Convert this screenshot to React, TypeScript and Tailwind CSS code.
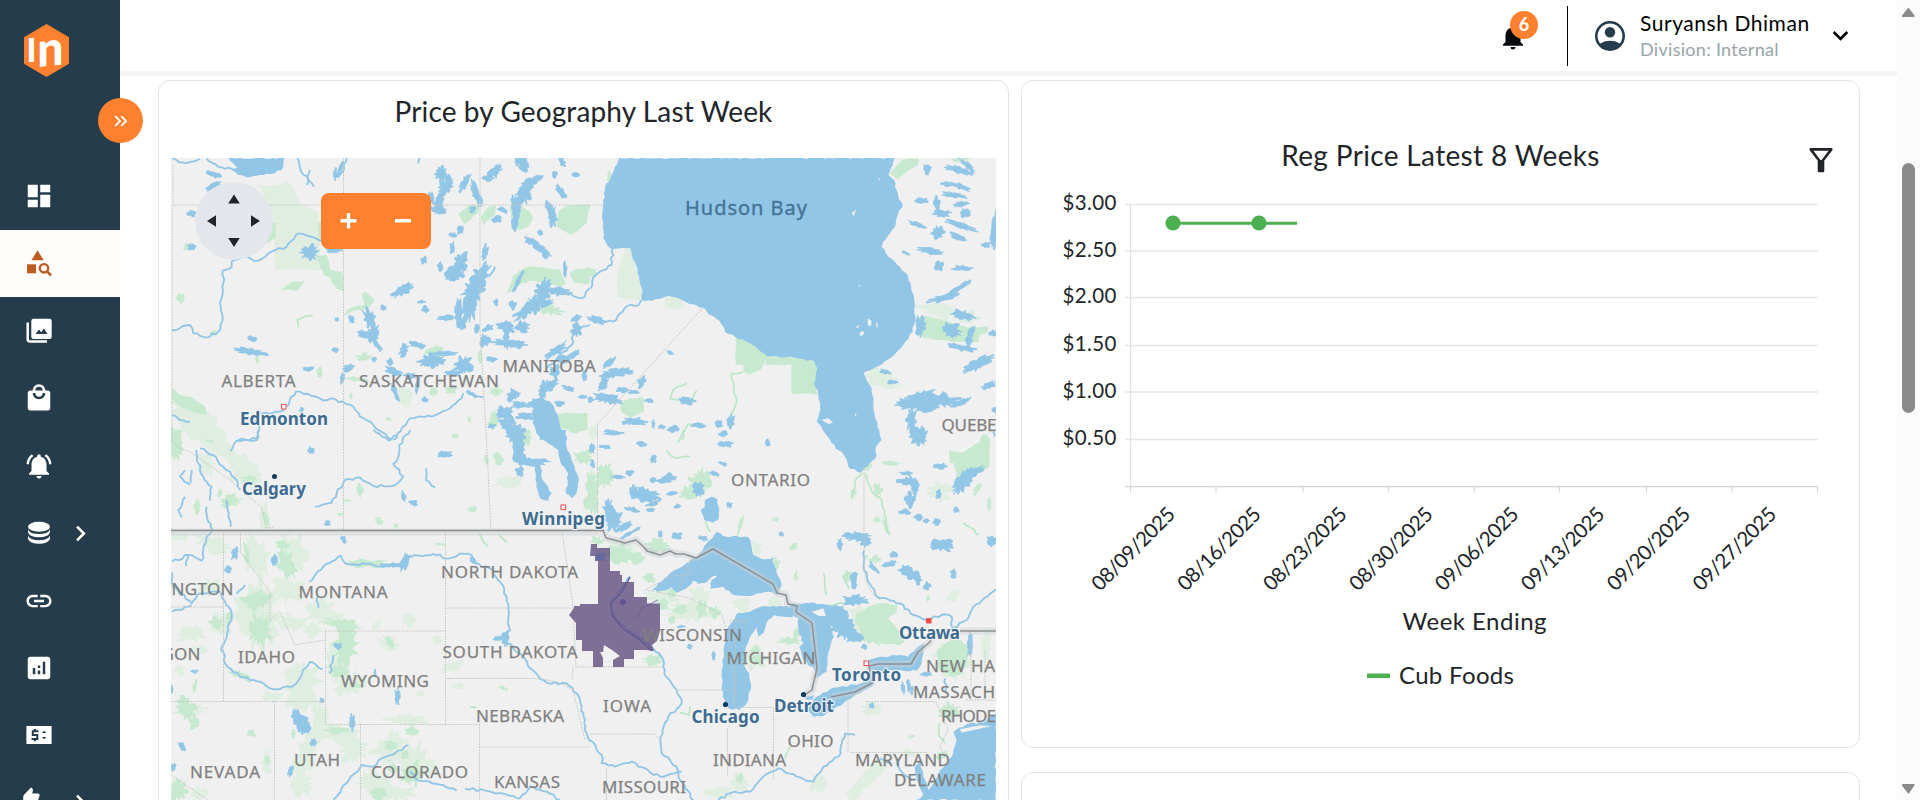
import React from "react";
import {
  MdDashboard,
  MdLocalMall,
  MdNotificationsActive,
  MdInsertLink,
  MdAnalytics,
  MdNotifications,
  MdKeyboardArrowDown,
  MdChevronRight,
  MdKeyboardDoubleArrowRight,
} from "react-icons/md";

/* ---------- map geometry helpers ---------- */

type Blob = [number, number, number, number, number];

const noise = (n: number) => {
  const v = Math.sin(n * 12.9898) * 43758.5453;
  return v - Math.floor(v);
};

function blobPath([cx, cy, rx, ry, rot]: Blob): string {
  const count = Math.max(14, Math.min(34, Math.round((rx + ry) * 0.6)));
  const a = (rot * Math.PI) / 180;
  let d = "";
  for (let i = 0; i < count; i++) {
    const t = (i / count) * Math.PI * 2;
    const k = 0.55 + noise(cx * 0.37 + cy * 0.71 + i * 1.93) * 0.78;
    const x = Math.cos(t) * rx * k;
    const y = Math.sin(t) * ry * k;
    const px = cx + x * Math.cos(a) - y * Math.sin(a);
    const py = cy + x * Math.sin(a) + y * Math.cos(a);
    d += `${i ? "L" : "M"}${px.toFixed(1)} ${py.toFixed(1)}`;
  }
  return d + "Z";
}

function rough(points: string, amp: number, close = false): string {
  const pts = points.trim().split(/\s+/).map((p) => p.split(",").map(Number));
  if (close) pts.push(pts[0]);
  let d = `M${pts[0][0]} ${pts[0][1]}`;
  for (let i = 1; i < pts.length; i++) {
    const [x0, y0] = pts[i - 1];
    const [x1, y1] = pts[i];
    const len = Math.hypot(x1 - x0, y1 - y0) || 1;
    const steps = Math.max(1, Math.round(len / 11));
    for (let s = 1; s <= steps; s++) {
      const t = s / steps;
      const off = s === steps ? 0 : (noise(x0 + y1 * 1.7 + s * 3.1) - 0.5) * 2 * amp;
      const x = x0 + (x1 - x0) * t + (-(y1 - y0) / len) * off;
      const y = y0 + (y1 - y0) * t + ((x1 - x0) / len) * off;
      d += `L${x.toFixed(1)} ${y.toFixed(1)}`;
    }
  }
  return close ? d + "Z" : d;
}

interface Region {
  dx: number;
  dy: number;
  pale: Blob[];
  parks: Blob[];
  palePoly: string[];
  parkPoly: string[];
  lakes: Blob[];
  water: string[];
  rivers: string[];
  trails: string[];
}

const northWest: Region = {
  dx: 160,
  dy: 70,
  pale: [[60, 1000, 30, 20, 40], [130, 1060, 60, 34, 40], [735, 980, 22, 30, 0], [1010, 960, 22, 16, 0]],
  parks: [
    [60, 685, 14, 16, 0], [88, 530, 18, 12, 0], [480, 908, 10, 16, 0], [612, 862, 24, 12, 0],
    [825, 845, 26, 20, 0], [875, 960, 18, 14, 0], [822, 965, 10, 16, 20], [292, 870, 7, 9, 0],
    [1172, 720, 36, 16, 10], [920, 712, 14, 10, 0], [686, 1048, 10, 7, 20], [1008, 965, 18, 12, 0],
    [960, 862, 6, 20, 0], [1000, 1050, 16, 26, 0], [885, 1098, 10, 7, 0], [928, 1048, 5, 12, -20],
    [572, 978, 5, 9, 0], [590, 928, 44, 6, 8], [160, 790, 14, 7, -30],
  ],
  palePoly: ["280,346 360,346 378,333 395,345 420,400 475,425 482,600 345,598 342,480 340,440 300,350", "36,1020 90,1010 140,1050 200,1085 190,1110 90,1110 50,1050"],
  parkPoly: [
    "360,662 395,636 435,634 415,660", "468,560 500,555 512,600 548,606 552,664 528,655 508,622 490,612",
    "474,460 484,455 484,510 474,500", "895,432 925,408 958,405 955,430 912,462", "962,440 985,412 1008,408 1004,435 970,466",
    "1050,410 1080,405 1110,425 1120,445 1105,470 1075,480 1055,450", "1195,425 1225,406 1290,404 1280,460 1235,495 1190,470",
    "1040,672 1060,615 1105,588 1200,600 1218,640 1205,650 1120,632 1085,640", "1228,610 1250,597 1290,592 1290,640 1245,640",
    "552,738 566,716 615,702 605,672 617,665 643,692 625,715 580,722", "36,955 60,975 100,985 135,1010 140,1035 110,1030 60,1010 36,985",
    "325,460 348,458 346,505 320,520", "1190,1030 1283,1030 1283,1080 1240,1090 1200,1070", "36,1070 60,1100 62,1110 36,1110",
  ],
  lakes: [
    [160, 312, 20, 9, 20], [160, 350, 22, 8, -25], [94, 431, 14, 9, 0], [94, 530, 12, 8, 0], [448, 548, 24, 22, 0],
    [520, 540, 24, 10, 0], [728, 660, 34, 16, -25], [670, 713, 9, 7, 20], [785, 696, 12, 4, 0], [795, 718, 12, 10, 30],
    [792, 570, 10, 13, 20], [840, 590, 9, 13, 0], [858, 743, 22, 8, 0], [530, 748, 8, 6, 0], [526, 840, 10, 7, 0],
    [446, 897, 14, 7, 0], [276, 806, 13, 8, 0], [272, 846, 42, 9, 10], [575, 748, 8, 12, -20], [628, 745, 16, 30, -20],
    [640, 790, 16, 30, 10], [612, 792, 18, 10, 20], [650, 822, 6, 26, -35], [732, 838, 12, 20, 20], [776, 826, 26, 9, 15],
    [690, 876, 9, 10, 0], [698, 905, 24, 12, 20], [642, 868, 8, 8, 0], [565, 892, 16, 10, -30], [548, 924, 7, 16, 10],
    [815, 872, 36, 20, -10], [855, 850, 40, 6, 0], [910, 885, 26, 26, 30], [880, 910, 24, 9, 0], [750, 918, 18, 10, 0],
    [705, 965, 8, 26, -20], [772, 945, 6, 26, 5], [795, 988, 8, 8, 0], [845, 312, 18, 22, 0], [858, 348, 16, 30, 30],
    [838, 395, 14, 34, 15], [835, 420, 26, 10, 10], [914, 340, 10, 30, 25], [948, 370, 12, 40, -20], [812, 385, 8, 18, 0],
    [1003, 305, 14, 28, 45], [985, 325, 16, 8, 0], [1090, 280, 16, 22, -20], [1073, 270, 10, 16, 0], [1110, 340, 36, 14, -35],
    [1090, 370, 24, 34, 20], [1070, 410, 16, 36, 0], [1065, 450, 9, 28, 0], [1030, 420, 16, 7, 20], [1010, 448, 14, 10, 0],
    [938, 420, 9, 10, 0], [1165, 410, 10, 22, -20], [1178, 440, 12, 30, 0], [1203, 365, 8, 22, -35], [1184, 314, 8, 10, 0],
    [1246, 314, 12, 7, 0], [1206, 275, 8, 16, -30], [1140, 488, 7, 10, 0], [1110, 515, 14, 10, 0], [1135, 530, 40, 9, 35],
    [1153, 548, 9, 18, -20], [900, 480, 8, 14, 10], [878, 495, 10, 8, 0], [877, 535, 8, 18, 0], [975, 545, 9, 22, 10],
    [900, 580, 18, 34, 15], [885, 610, 28, 20, -10], [960, 620, 22, 44, 25], [940, 665, 30, 34, 10], [930, 710, 22, 44, 10],
    [895, 722, 9, 36, 0], [905, 760, 14, 16, 0], [1008, 698, 7, 10, 0], [1060, 705, 10, 14, 0], [1075, 635, 7, 32, 25],
    [1098, 720, 42, 16, -40], [1125, 705, 20, 26, 0], [1150, 665, 22, 34, 10], [1200, 665, 30, 12, 10], [1040, 770, 26, 16, 15],
    [1085, 770, 20, 16, 0], [1050, 820, 50, 10, 5], [1040, 800, 9, 30, 0], [975, 812, 14, 18, 0], [985, 775, 16, 9, -20],
    [1075, 825, 12, 10, 0], [995, 868, 14, 10, 0], [950, 775, 7, 12, 0], [1160, 700, 20, 10, -30], [1248, 745, 16, 8, -20],
    [1250, 780, 14, 18, 10], [1190, 840, 36, 12, -35], [1210, 870, 20, 12, 0], [1240, 855, 20, 8, -30], [1215, 598, 6, 20, 0],
    [1170, 945, 24, 14, -30], [1150, 960, 12, 26, 10], [1185, 905, 14, 20, 0], [1060, 975, 20, 18, 0], [1080, 1005, 26, 10, 0],
    [1035, 1030, 22, 20, 0], [1040, 1060, 22, 20, 0], [1095, 1040, 26, 10, 0], [1070, 1090, 26, 26, 0], [1130, 1000, 24, 16, 0],
    [995, 1068, 10, 8, 0], [935, 972, 16, 5, 30], [1200, 1000, 14, 8, 0], [1270, 980, 16, 5, 0], [1225, 955, 20, 6, 20],
    [1272, 918, 8, 14, 0], [425, 1022, 6, 9, 0], [540, 300, 6, 22, 20], [526, 310, 5, 20, 0],
  ],
  water: [
    "205,264 372,264 366,300 330,312 270,322 235,315 215,300 232,292 218,278", "1118,985 1150,985 1175,1000 1190,1030 1215,1110 1140,1110 1118,1060",
  ],
  rivers: [
    "36,264 70,278 120,266", "140,266 175,290 225,300", "412,264 420,295 445,330 462,350", "440,345 450,300", "560,264 548,305 525,322", "775,280 778,264",
    "36,780 90,765 100,790 140,803 175,785 188,745 180,700 190,640 188,602 215,590 215,575 245,560 295,572 335,545 380,530 415,490 440,497 480,512 530,505",
    "1005,590 985,620", "1290,655 1265,685 1220,670 1160,665", "1290,765 1240,785 1235,825 1200,855 1160,895",
    "300,1032 370,1022 408,965 455,978 490,992 515,985 580,1010 600,1040 640,1065 695,1108", "700,1110 750,1045 815,1040 860,1020 905,985 910,970",
    "925,968 970,982", "36,1035 60,1050 90,1055", "235,1110 290,1106 298,1075 285,1050",
  ],
  trails: ["415,772 412,748 440,738 458,736"],
};

const northEast: Region = {
  dx: 590,
  dy: 70,
  pale: [[1050, 720, 60, 24, 10], [878, 925, 60, 32, 15], [1130, 740, 34, 20, 0], [10, 1085, 14, 24, 0]],
  parks: [[8, 608, 14, 14, 0], [58, 320, 8, 16, 0], [1115, 268, 26, 8, 0], [1185, 1106, 14, 10, 0]],
  palePoly: ["82,600 105,540 125,530 140,600 158,660 150,692 82,682", "225,685 265,680 285,705 262,720 228,710"],
  parkPoly: [
    "438,800 480,815 533,856 515,895 480,914 460,905 460,885 438,885", "530,862 600,862 675,872 685,895 675,935 682,972 605,972 605,884 525,884",
    "978,742 1010,738 1070,752 1130,772 1195,770 1190,790 1170,795 1165,818 1100,815 1040,810 990,800", "93,998 120,985 160,982 162,1025 120,1042 93,1025",
    "900,312 935,270 985,264 985,285 950,305 925,328", "715,1045 745,1046 762,1080 735,1070",
  ],
  lakes: [
    [1014, 296, 12, 16, 0], [1105, 300, 40, 9, 15], [1130, 285, 26, 8, 45], [1070, 342, 16, 7, 10], [1112, 350, 28, 9, 20],
    [1092, 375, 34, 7, 10], [995, 391, 20, 7, 0], [1040, 400, 9, 20, 0], [1058, 430, 26, 9, 0], [1115, 402, 26, 8, -10],
    [1125, 430, 14, 12, 0], [980, 464, 28, 6, 20], [1110, 466, 46, 8, 20], [1044, 487, 18, 17, 0], [1100, 500, 24, 8, 20],
    [948, 549, 12, 4, 20], [1022, 543, 34, 8, 10], [1048, 588, 12, 16, 0], [1115, 594, 28, 7, 0], [1188, 524, 12, 9, 0],
    [1213, 470, 8, 44, 10], [1212, 510, 8, 24, 0], [1060, 684, 44, 9, -15], [1105, 655, 46, 7, -32], [1120, 735, 36, 12, 15],
    [990, 768, 14, 28, 0], [1085, 780, 26, 20, 10], [1140, 800, 9, 34, 20], [1110, 832, 42, 9, 10], [1206, 790, 12, 9, 0],
    [1162, 884, 50, 14, -30], [1196, 946, 24, 9, -20], [888, 906, 20, 6, 15], [906, 936, 18, 5, 0], [985, 985, 50, 16, -20],
    [1050, 990, 60, 20, 5], [960, 1000, 46, 16, 0], [1010, 1010, 34, 14, 0], [965, 1050, 14, 34, 0], [990, 1090, 20, 20, 0],
    [1214, 1020, 8, 8, 0], [1110, 998, 30, 8, -20], [240, 848, 10, 5, 20], [58, 880, 22, 9, -45], [72, 910, 44, 12, -10],
    [40, 940, 12, 30, 20], [120, 907, 10, 7, 0], [155, 935, 12, 18, 20], [98, 960, 18, 7, 0], [55, 985, 40, 14, 10],
    [2, 990, 8, 9, 0], [130, 965, 16, 6, 0], [180, 992, 14, 7, 0], [288, 993, 26, 10, 5], [130, 1055, 36, 11, 0],
    [190, 1062, 5, 14, 0], [215, 1070, 12, 6, 0], [250, 1077, 18, 10, 0], [325, 1066, 20, 7, 0], [385, 1062, 12, 10, 0],
    [420, 1055, 12, 22, 0], [400, 1092, 12, 8, 0], [72, 1090, 24, 5, 0], [20, 750, 26, 9, 15],
  ],
  water: [
    "88,264 72,300 62,325 45,350 40,400 38,450 40,505 60,535 120,533 130,570 143,600 148,630 158,665 155,690 185,693 235,678 265,685 300,703 340,713 360,735 388,752 405,785 435,800 470,815 500,833 533,860 570,862 600,860 640,868 672,872 682,895 672,940 685,975 690,1010 685,1040 680,1055 698,1080 725,1120 745,1140 765,1160 775,1190 810,1208 822,1195 850,1170 860,1155 858,1130 875,1110 868,1080 855,1040 850,1000 845,955 830,930 820,910 860,890 900,865 940,825 968,785 976,740 972,680 955,620 930,590 895,560 875,530 880,515 915,470 925,430 938,405 925,380 912,330 895,315 915,264",
  ],
  rivers: ["68,535 65,585 40,600 8,625 2,655", "155,690 145,706 112,708 70,755 5,752", "1100,1000 1143,982", "1143,632 1080,665", "1210,1085 1215,1100"],
  trails: ["460,905 425,910 432,960 440,995 425,1030 415,1070", "290,940 250,960 240,985 265,990", "320,962 308,990", "345,1065 295,1062 275,1110"],
};

const southWest: Region = {
  dx: 160,
  dy: 430,
  pale: [
    [250, 120, 50, 40, 30], [60, 320, 30, 14, 0], [160, 340, 60, 26, 10], [290, 380, 40, 70, -20], [400, 370, 40, 60, 0],
    [290, 560, 60, 120, 0], [380, 480, 50, 40, 0], [150, 470, 40, 24, 0], [180, 580, 34, 34, 0], [400, 580, 40, 26, 20],
    [430, 760, 50, 80, 10], [340, 800, 30, 16, 0], [500, 560, 50, 20, 0], [560, 760, 36, 40, 0], [520, 700, 20, 60, 0],
    [600, 755, 24, 24, 0], [90, 610, 40, 26, 0], [120, 660, 20, 16, 0], [748, 568, 20, 24, 0], [650, 585, 20, 8, -40],
    [688, 640, 34, 20, 30], [830, 630, 14, 16, 0], [880, 710, 40, 16, -20], [900, 768, 20, 9, -20], [740, 870, 60, 20, 0],
    [690, 960, 50, 50, 20], [760, 1000, 40, 70, 10], [640, 1060, 44, 40, 0], [440, 970, 30, 90, 20], [320, 1000, 16, 40, 0],
    [520, 910, 70, 24, 0], [580, 960, 40, 40, 0], [420, 1060, 36, 40, 0], [800, 1010, 34, 30, 0], [700, 1090, 70, 24, 0],
    [1045, 155, 44, 18, 0], [460, 600, 30, 26, 0], [780, 790, 14, 12, 0], [480, 860, 26, 44, 0], [90, 840, 50, 20, 0],
    [480, 540, 40, 40, 0], [60, 720, 16, 16, 0], [140, 100, 24, 40, 0], [310, 260, 14, 50, 0], [120, 1090, 30, 20, 0],
  ],
  parks: [
    [45, 40, 24, 46, 0], [210, 214, 34, 18, -10], [270, 150, 26, 16, 20], [112, 230, 9, 24, 0], [380, 400, 26, 44, -25],
    [368, 345, 24, 12, 20], [290, 510, 44, 28, -20], [300, 600, 34, 50, 0], [170, 580, 22, 16, 30], [210, 560, 12, 24, 10],
    [550, 585, 50, 20, 10], [555, 650, 36, 50, 0], [540, 720, 30, 20, 0], [590, 765, 20, 9, 20], [692, 640, 10, 22, -30],
    [240, 735, 34, 12, 25], [80, 840, 26, 40, -20], [105, 880, 18, 20, 0], [275, 910, 12, 12, 0], [320, 990, 8, 16, 0],
    [400, 910, 7, 16, 0], [530, 902, 34, 12, 0], [760, 905, 20, 16, 20], [690, 945, 20, 16, 0], [735, 975, 14, 12, 0],
    [700, 1020, 16, 14, 0], [770, 1030, 14, 34, 0], [655, 1090, 24, 20, 0], [50, 1080, 30, 30, 20], [600, 182, 10, 20, 0],
    [655, 272, 12, 14, 0], [708, 288, 10, 8, 0], [938, 238, 14, 10, 0], [1016, 88, 14, 20, 0], [978, 88, 8, 14, 0],
    [885, 17, 12, 7, 0], [560, 212, 14, 5, 0], [542, 252, 12, 5, 0], [1033, 776, 16, 5, 25], [1270, 80, 30, 22, 0],
    [1280, 220, 12, 20, 0], [1095, 25, 20, 26, 0], [320, 270, 8, 20, -20], [260, 360, 7, 22, -20], [620, 400, 60, 12, 0],
    [105, 770, 7, 20, 10], [180, 190, 10, 12, 0], [840, 343, 14, 4, 0], [260, 380, 8, 16, -20], [745, 1035, 20, 26, 0],
  ],
  palePoly: ["110,0 180,0 230,70 290,110 320,190 300,200 250,150 200,90 120,40"],
  parkPoly: ["120,0 150,0 160,40 140,35"],
  lakes: [
    [452, 62, 9, 10, 0], [852, 72, 24, 9, 0], [502, 280, 9, 7, 0], [550, 328, 7, 12, -20], [760, 218, 12, 8, 10],
    [730, 198, 6, 14, -20], [225, 370, 10, 18, 20], [205, 418, 9, 12, 0], [342, 390, 9, 18, 0], [534, 648, 12, 9, 0],
    [430, 885, 18, 28, -20], [408, 860, 12, 22, 0], [460, 938, 8, 12, 0], [393, 1022, 7, 16, 20], [65, 950, 7, 16, -20],
    [40, 1012, 8, 12, 0], [104, 725, 10, 5, 0], [485, 812, 6, 7, 0], [712, 800, 7, 26, 0], [577, 876, 7, 24, 0],
    [645, 730, 3, 12, 0], [1078, 125, 12, 16, 0], [735, 395, 10, 26, 20], [700, 406, 40, 6, 0], [1120, 95, 40, 10, 0],
    [1080, 60, 12, 50, 0], [1035, 625, 10, 24, 0], [1020, 625, 22, 5, 0], [35, 775, 4, 12, 0], [940, 392, 14, 8, 30],
  ],
  water: [
    "1140,0 1218,0 1222,60 1240,100 1255,140 1250,190 1235,205 1218,190 1225,130 1205,105 1195,60 1140,20", "1055,0 1085,0 1085,60 1100,85 1140,90 1145,145 1175,190 1165,212 1140,205 1130,160 1125,110 1060,95",
    "398,840 412,838 420,855 440,860 445,880 455,895 448,906 425,905 412,890 400,870",
  ],
  rivers: [
    "110,60 115,100 130,140 155,170 150,212", "120,55 160,75 190,110 225,145 240,180", "212,64 230,32 290,30 298,0", "75,120 60,140 90,165", "75,200 55,240 65,262", "95,120 92,160",
    "140,230 145,275 158,300 140,320 125,392 85,375 36,395", "85,372 78,408", "200,210 205,260 212,290", "640,0 685,32 710,15", "750,0 718,45 715,80 700,102 730,140 705,165 640,168 600,142 555,150 530,190 515,218 465,230",
    "798,115 798,150 825,172", "448,455 490,410 543,377 555,400 620,402 660,410 720,405 740,378 820,372 868,385 900,370 935,375 945,400 990,415 1020,455 1040,500 1045,560 1050,600 1035,630 1060,655 1090,680 1110,715 1160,758 1220,760 1250,790 1270,850 1275,900 1290,935",
    "475,535 472,500", "36,428 40,470 95,520 120,490 180,485 195,515 215,550 205,600 185,650 195,700 240,740 300,755 340,778 400,768 450,695 488,718", "36,545 95,525", "230,492 255,465", "520,675 510,730",
    "520,1110 560,1060 605,1005 640,1010 665,985 705,970 745,945", "750,1025 775,1052 850,1065 890,1082", "915,1076 975,1082 1080,1105 1110,1070 1160,1085 1200,1110",
  ],
  trails: ["958,310 970,335 985,350", "1015,310 1040,338", "932,830 950,832"],
};

const southEast: Region = {
  dx: 590,
  dy: 430,
  pale: [
    [90, 360, 60, 30, 0], [220, 500, 50, 20, 0], [330, 495, 36, 22, 0], [300, 545, 80, 30, 0], [455, 520, 24, 20, 0],
    [500, 355, 16, 20, 0], [1050, 180, 36, 30, 0], [1090, 500, 26, 14, -40], [830, 580, 60, 50, 0], [1095, 690, 60, 60, 0],
    [1190, 650, 16, 50, 0], [850, 1030, 20, 70, 45], [800, 1080, 20, 50, 30], [690, 1060, 26, 30, 0], [450, 1060, 30, 34, 0],
    [390, 1090, 50, 16, 0], [845, 835, 26, 26, 0], [495, 680, 40, 36, 0], [555, 515, 20, 16, 0], [960, 970, 24, 12, 0],
  ],
  parks: [
    [8, 190, 18, 70, 0], [45, 135, 26, 36, 0], [330, 160, 34, 44, 30], [295, 190, 26, 20, 0], [355, 160, 14, 14, 0],
    [90, 370, 40, 26, 0], [140, 385, 24, 16, 0], [205, 350, 36, 22, 0], [178, 445, 20, 14, 0], [220, 520, 20, 16, 0],
    [245, 490, 14, 14, 0], [270, 540, 24, 14, 0], [335, 540, 16, 26, 0], [375, 545, 16, 18, 0], [245, 570, 12, 14, 0],
    [558, 405, 12, 26, 0], [600, 632, 36, 12, 0], [620, 610, 9, 20, 0], [610, 352, 14, 9, -30], [556, 268, 14, 7, 0],
    [450, 285, 7, 26, 15], [618, 440, 6, 18, 0], [190, 692, 30, 18, 0], [500, 690, 16, 18, 0], [495, 660, 16, 14, 0],
    [840, 620, 50, 20, 20], [863, 180, 14, 22, 0], [860, 270, 14, 9, 0],
    [888, 290, 7, 28, -20], [1160, 175, 9, 20, 30], [828, 380, 5, 7, 0], [855, 388, 18, 12, 0], [773, 440, 16, 16, 0],
    [1014, 505, 7, 12, 0], [965, 920, 12, 5, -20], [1080, 845, 30, 26, 0], [1198, 220, 6, 20, 0],
    [1060, 975, 20, 14, 0], [450, 1045, 12, 14, 0], [20, 330, 20, 12, 0], [905, 100, 30, 7, 0], [830, 110, 14, 16, 0], [790, 190, 9, 18, 0],
  ],
  palePoly: [],
  parkPoly: [
    "1078,62 1120,68 1190,20 1200,25 1198,110 1150,140 1105,160 1092,100 1078,98",
    "800,550 840,530 870,518 922,525 920,545 895,565 925,600 955,625 930,645 880,640 840,625 815,600 795,580",
    "1040,660 1065,640 1105,625 1135,650 1132,700 1110,735 1085,740 1045,715",
  ],
  lakes: [
    [48, 50, 18, 5, 0], [65, 5, 18, 6, 0], [155, 43, 14, 7, 0], [405, 43, 22, 8, 0], [403, 10, 10, 10, 0], [533, 38, 8, 9, 0],
    [190, 88, 8, 12, 0], [120, 128, 12, 9, 0], [85, 142, 18, 5, 0], [165, 195, 40, 20, 15], [130, 185, 10, 20, 0], [232, 145, 28, 14, -15],
    [190, 150, 10, 8, 0], [375, 132, 14, 6, 20], [400, 102, 12, 5, 20], [418, 225, 8, 8, 0], [130, 240, 24, 7, 20],
    [190, 220, 22, 6, -20], [70, 270, 24, 34, 0], [55, 240, 14, 30, 0], [100, 290, 26, 10, -30], [120, 310, 30, 5, -30], [182, 240, 12, 5, 0],
    [245, 190, 14, 7, 0], [262, 228, 10, 6, 0], [325, 180, 16, 22, 0], [210, 312, 6, 10, 0], [262, 317, 14, 9, 0], [340, 325, 14, 7, 10],
    [574, 312, 7, 8, 0], [800, 320, 36, 12, 0], [828, 335, 16, 14, 0], [750, 345, 7, 18, 0], [792, 440, 9, 18, 0], [793, 465, 8, 12, 0],
    [792, 510, 38, 14, 0], [850, 412, 20, 7, 50], [898, 402, 24, 9, -20], [910, 375, 12, 8, 0], [945, 418, 18, 14, 0], [968, 435, 26, 14, 20],
    [985, 450, 9, 16, 0], [1012, 468, 10, 12, 0], [1090, 430, 9, 12, 0], [1060, 345, 34, 18, 0], [1205, 335, 16, 16, 0], [1098, 240, 10, 8, -30],
    [950, 130, 20, 6, 0], [950, 155, 26, 12, 0], [975, 170, 12, 20, 0], [960, 210, 14, 22, 0], [945, 245, 16, 8, 0], [985, 262, 12, 8, 0],
    [1008, 272, 9, 6, 0], [1040, 275, 10, 10, -20], [1045, 192, 7, 16, 0], [1052, 110, 18, 10, 0], [1120, 155, 18, 40, 35], [1150, 125, 30, 12, -20],
    [985, 20, 22, 22, 0], [300, 650, 6, 9, 0], [370, 676, 5, 14, 0], [272, 590, 12, 4, 0], [760, 585, 34, 34, 0], [790, 622, 26, 14, 10],
    [735, 550, 34, 22, 0], [823, 650, 10, 7, 0], [940, 775, 5, 16, -10], [955, 765, 5, 18, 0], [965, 780, 5, 12, 0], [1140, 645, 7, 36, 0],
    [1008, 733, 16, 5, 0], [845, 828, 7, 8, 0], [5, 55, 8, 16, 0], [8, 100, 6, 12, 0],
  ],
  water: [
    "182,482 205,460 240,430 290,398 325,378 350,340 380,305 400,318 440,318 475,322 485,350 490,375 520,388 550,382 552,405 565,440 575,468 560,495 535,485 510,490 470,498 425,492 400,470 362,478 365,450 395,430 370,438 345,460 325,462 310,452 285,478 262,488 245,472 215,482",
    "398,700 402,650 415,590 430,572 445,548 480,545 520,528 560,530 600,530 610,560 580,560 552,555 535,570 520,610 505,620 500,590 480,620 468,650 460,700 478,730 482,780 470,820 450,840 415,835 398,800 395,740",
    "605,520 660,518 715,525 760,528 770,570 800,600 808,635 775,625 740,600 722,580 732,620 720,655 712,690 710,725 680,745 675,720 640,690 628,650 640,640 625,600 625,565 590,548",
    "645,800 672,795 668,808 650,810", "650,835 680,800 720,778 750,770 800,765 835,748 855,752 845,770 790,800 760,820 735,835 700,858 670,860",
    "830,700 840,688 880,680 930,675 955,680 985,650 1005,640 1000,670 995,700 980,722 930,720 880,722 845,722",
    "1218,850 1218,1110 980,1110 1000,1095 985,1060 975,1010 990,990 1000,1030 1015,1080 1030,1060 1050,1020 1085,980 1100,930 1090,905 1140,880 1180,878",
    "345,210 365,200 382,208 388,240 384,270 368,278 342,268 332,240 345,230",
  ],
  rivers: [
    "822,360 822,420 860,500 930,520 970,555 1010,570 1055,555 1085,560 1085,590", "1218,478 1150,530 1130,570 1080,600", "190,655 220,690 228,740 260,780 275,820 235,860 212,920 215,970 260,1010 270,1050 310,1110",
    "0,930 35,975 35,1000 75,1010 125,995 145,1010 210,1040 275,1025", "385,1110 420,1090 480,1085 520,1040 565,1015 620,1040 670,1055 700,1010 745,980 765,910 795,915",
    "120,440 95,480 60,520 75,565 120,605 190,655", "920,990 930,1020 965,1050", "950,130 985,165 960,230", "1065,745 1068,790", "905,1000 870,985",
  ],
  trails: [
    "230,60 250,82 300,80", "280,0 262,38", "815,128 795,155 785,205", "825,130 850,190 875,210 895,310", "700,430 708,495", "715,525 770,520 830,510", "345,275 362,305", "270,848 300,858", "300,828 298,852",
    "1120,278 1145,295 1165,315", "782,425 762,440 778,475", "600,950 585,985", "1050,880 1045,915 1065,940",
  ],
};

const regions = [southWest, southEast, northWest, northEast];

/* state and province borders, in page units */
const borders = [
  "M173 165V205H602", "M172 205V440Q176 448 190 452L230 480L262 508L266 528L274 527", "M343.500 158V530", "M480 158V330L486 430L491 530",
  "M702.500 308L597.500 424V530", "M864 466V570Q866 590 880 600",
  "M223.500 532V702M240.500 532V552L270 592L270 620L280 612L295 645L325 640", "M325.500 631H445.500M325.500 631V724.500H478.500M445.500 532V726M445.500 608H574",
  "M171 607H223M171 701.500H325M274.500 701.500V800M360.500 724V800M479.500 724V800M479.500 747H590M445 678.500H535Q552 680 562 684L573 690L585 740",
  "M562 532L568 570L573 606L576 667H664M573 667L572 680", "M590 734H655L662 744M606.500 768V800M676 690H728.500M734 707.500H773M773.500 707.500V780M727.500 728V776",
  "M848 695V752M866 701.500H936L948 730L940 746L945 757M850 752.500H928M971 642V700M985 650V700M966 700H996",
  "M645 590L690 598L722 615L726 628M690 560L678 592M690 560V574L672 576L645 590M735 621V690L734 706L730 620L748 622L742 628",
  "M171 775L208 800",
];

const stateLabels: [string, number, number, number][] = [
  ["ALBERTA", 221.5, 387, 74], ["SASKATCHEWAN", 359, 387, 140], ["MANITOBA", 502.500, 372, 93], ["QUEBE", 941.500, 431, 55],
  ["ONTARIO", 731, 486, 79], ["NORTH DAKOTA", 441, 578, 137], ["SOUTH DAKOTA", 442.500, 658, 135], ["MONTANA", 298.500, 598, 89],
  ["NGTON", 171.500, 594.500, 62], ["IDAHO", 238, 663, 57], ["WYOMING", 341, 686.500, 88], ["NEBRASKA", 476, 721.500, 88],
  ["NEVADA", 190, 777.500, 70], ["UTAH", 294, 766, 46], ["COLORADO", 371, 777.500, 97], ["KANSAS", 494, 788, 66],
  ["WISCONSIN", 643, 641, 99], ["MICHIGAN", 726.500, 663.500, 89], ["IOWA", 603, 711.500, 48], ["OHIO", 787.500, 747, 46],
  ["INDIANA", 713, 766, 73], ["MISSOURI", 602, 792.500, 84], ["MARYLAND", 855, 766, 95], ["DELAWARE", 894, 786, 92],
  ["MASSACH", 913, 698, 82], ["NEW HA", 926, 671.500, 69], ["RHODE", 941, 722, 55], ["GON", 161.500, 659.500, 39],
];

const cityLabels: [string, number, number, number][] = [
  ["Edmonton", 240, 425, 88], ["Calgary", 242, 495, 64], ["Winnipeg", 522, 525, 83], ["Ottawa", 899, 639, 61],
  ["Toronto", 832, 681, 69], ["Detroit", 774, 712, 60], ["Chicago", 691.500, 722.500, 68],
];

function RegionShapes({ r }: { r: Region }) {
  return (
    <g transform={`translate(${r.dx} ${r.dy}) scale(0.33333)`}>
      {r.pale.map((b, i) => <path key={"a" + i} d={blobPath(b)} fill="#e0eee2" />)}
      {r.palePoly.map((p, i) => <path key={"b" + i} d={rough(p, 2, true)} fill="#e0eee2" />)}
      {r.parks.map((b, i) => <path key={"c" + i} d={blobPath(b)} fill="#c6e9cf" />)}
      {r.parkPoly.map((p, i) => <path key={"d" + i} d={rough(p, 2, true)} fill="#c6e9cf" />)}
      {r.trails.map((p, i) => <path key={"e" + i} d={rough(p, 3)} fill="none" stroke="#b9e6c4" strokeWidth="5" />)}
      {r.rivers.map((p, i) => <path key={"f" + i} d={rough(p, 4)} fill="none" stroke="#92c6e6" strokeWidth="5.500" strokeLinejoin="round" />)}
      {r.lakes.map((b, i) => <path key={"g" + i} d={blobPath(b)} fill="#92c6e6" stroke="#92c6e6" strokeWidth="2.500" />)}
      {r.water.map((p, i) => <path key={"h" + i} d={rough(p, 3, true)} fill="#92c6e6" />)}
    </g>
  );
}

const usBorderEast =
  "M603 530L606 538L618 541L625 543L636 540L644 547L647 551L660 555L670 551L676 554L684 554L696 558L713 549L773 584L777 593L786 595L788 604L797 606L796 612L812 623L817 668L812 690L803 696";
const usBorderLakes = "M831 697L855 692L872 683L869 666L878 664H911L918 652L930 642L932 636M960 631H996";

function GeoMap() {
  return (
    <svg viewBox="171 158 825 642" className="block h-[642px] w-[825px] bg-[#f0f0f0]" role="img" aria-label="Price map">
      {regions.map((r, i) => <RegionShapes key={i} r={r} />)}
      {/* islands and peninsulas */}
      <g transform="translate(590 70) scale(0.33333)" fill="#f0f0f0">
        <path d="M833 745l12 8l-2 16l-10-4zM808 790l10-8l6 8l-12 10zM858 755l6 8l-4 14zM796 772l12-8l-4 10zM785 430l14-12l-8 20zM865 325l8 4l-6 2zM806 645l6 3l-5 3zM695 1050l20-6l14 14l-14 4zM794 1028l6 6l-4 6z" />
        <path d="M665 1625l35-10l8 24l-24-2zM1110 1978l60-12l36 2l-92 20z" />
      </g>
      <path d={borders.join("")} fill="none" stroke="#c2c7c2" strokeWidth="1" strokeDasharray="1.6 1.2" />
      <g fill="none" strokeLinejoin="round">
        <path d={usBorderEast + usBorderLakes + "M171 532H604"} stroke="#c9ced2" strokeOpacity=".45" strokeWidth="7" />
        <path d={usBorderEast + usBorderLakes} stroke="#8d9194" strokeWidth="1.5" />
        <path d="M171 530.500H604" stroke="#8d8d8d" strokeWidth="1.7" />
      </g>

      {/* priced market area */}
      <path
        d="M591 544H597V548H610V571H620V575H622V582H634V597H647V603.500H660V631L657 641L652 645L654 651L646 650H634V659H624V667H613V660L620 656L612 650L604 645L603 652L600 652L603 658V667H593V651H582V640H576V623L569 615L574 608V606H580V604H598V561H595V556H590Z"
        fill="#604f80"
        fillOpacity=".8"
      />
      <g fill="none" stroke="#64598f" strokeWidth="1.4">
        <path d="M630 577L622 592L611 603L612 615L622 628L640 640L652 651" />
        <path d="M658 600L642 608L637 618" strokeOpacity=".5" />
      </g>
      <circle cx="623" cy="602" r="3" fill="#5f568f" />
      <path d="M596 553h9v8l-8-1z" fill="#6468a0" />

      <g fill="#808080" stroke="#808080" strokeWidth=".25" fontFamily="'Noto Sans','Open Sans',sans-serif" fontSize="17">
        {stateLabels.map(([t, x, y, w]) => (
          <text key={t} x={x} y={y} textLength={w} lengthAdjust="spacing">{t}</text>
        ))}
      </g>
      <text x="685" y="215" fill="#447497" stroke="#447497" strokeWidth=".35" fontFamily="'Noto Sans','Open Sans',sans-serif" fontSize="20" textLength="122">Hudson Bay</text>
      <g fill="#3e6b90" stroke="#f4f7f9" strokeWidth="2.4" strokeOpacity=".8" paintOrder="stroke" fontFamily="'Noto Sans','Open Sans',sans-serif" fontWeight="700" fontSize="17">
        {cityLabels.map(([t, x, y, w]) => (
          <text key={t} x={x} y={y} textLength={w} lengthAdjust="spacing">{t}</text>
        ))}
      </g>

      <g fill="#fff" stroke="#ee5a5a" strokeWidth="1.1">
        <rect x="281.500" y="404.500" width="4.500" height="4.500" />
        <rect x="561" y="505" width="4.500" height="4.500" />
        <rect x="864" y="661" width="4.500" height="4.500" />
        <rect x="926.500" y="618.500" width="4.500" height="4.500" fill="#ee4444" />
      </g>
      <g fill="#123a5e">
        <circle cx="274.500" cy="476.500" r="2.500" />
        <circle cx="725.500" cy="704.500" r="2.600" />
        <circle cx="803.500" cy="694.500" r="2.600" />
      </g>
    </svg>
  );
}

/* ---------- chart ---------- */

const yTicks: [string, number][] = [["$3.00", 204.5], ["$2.50", 251], ["$2.00", 297.5], ["$1.50", 345.5], ["$1.00", 392], ["$0.50", 439.5]];
const xTicks = [1130.5, 1216, 1303, 1388.5, 1474, 1559.5, 1646.5, 1732, 1817.5];
const weeks = ["08/09/2025", "08/16/2025", "08/23/2025", "08/30/2025", "09/06/2025", "09/13/2025", "09/20/2025", "09/27/2025"];

function PriceChart() {
  return (
    <svg viewBox="1022 185 836 515" className="block h-[515px] w-[836px]" fontFamily="Lato,'Noto Sans',sans-serif" fill="#212529">
      {yTicks.map(([label, y]) => (
        <g key={label}>
          <path d={`M1125 ${y}H1818`} stroke="#e6e6e6" strokeWidth="1.3" />
          <text x="1062.500" y={y + 5.8} fontSize="20.500" textLength="54">{label}</text>
        </g>
      ))}
      <path d="M1130.500 204V487" stroke="#e2e2e2" strokeWidth="1.2" />
      <path d="M1125 486.700H1818" stroke="#d3d3d3" strokeWidth="1.300" />
      {xTicks.map((x) => <path key={x} d={`M${x} 487V492.500`} stroke="#d9d9d9" strokeWidth="1.2" />)}
      {weeks.map((w, i) => (
        <text key={w} transform={`translate(${1100 + i * 85.9} 592) rotate(-45)`} fontSize="20.500" textLength="108">{w}</text>
      ))}
      <path d="M1173 223.300H1297" stroke="#4caf50" strokeWidth="3" />
      <circle cx="1173" cy="223" r="7.600" fill="#4caf50" />
      <circle cx="1259" cy="223" r="7.600" fill="#4caf50" />
      <text x="1402.500" y="630" fontSize="24" textLength="144">Week Ending</text>
      <rect x="1367" y="673.500" width="23" height="4.500" fill="#4caf50" />
      <text x="1399" y="684" fontSize="24" textLength="115">Cub Foods</text>
    </svg>
  );
}

/* ---------- icons ---------- */

const CategorySearchIcon = () => (
  <svg viewBox="0 0 30 30" className="size-[30px]" fill="#bd5b20">
    <path d="M13.500 1.200L19.700 11.300H7.500Z" />
    <path d="M3 15.300H12V24.300H3Z" />
    <circle cx="20" cy="19.300" r="4.200" fill="none" stroke="#bd5b20" strokeWidth="2.400" />
    <path d="M23 22.300L27 26.300" stroke="#bd5b20" strokeWidth="2.600" />
  </svg>
);

const GalleryIcon = () => (
  <svg viewBox="0 0 30 30" className="size-[30px]">
    <path d="M3.700 6.500V23.300Q3.700 25.500 6 25.500H23" fill="none" stroke="#fff" strokeWidth="2.500" />
    <rect x="7.300" y="2.800" width="20.400" height="20.200" rx="2.200" fill="#fff" />
    <path d="M11.500 18L15 13.500L17.200 16.300L19.800 12.500L23.500 18Z" fill="#243c4c" />
  </svg>
);

const DatabaseIcon = () => (
  <svg viewBox="0 0 30 30" className="size-[30px]" fill="#fff">
    <ellipse cx="15" cy="8.800" rx="11" ry="5" />
    <path d="M4 11.500Q6 16 15 16Q24 16 26 11.500V14.500Q24 19.300 15 19.300Q6 19.300 4 14.500Z" />
    <path d="M4 17.800Q6 22.200 15 22.200Q24 22.200 26 17.800V21Q24 25.800 15 25.800Q6 25.800 4 21Z" />
  </svg>
);

const PriceIcon = () => (
  <svg viewBox="0 0 30 30" className="size-[30px]">
    <path d="M2.400 6H27.600V24H2.400Z" fill="#fff" />
    <path d="M14.500 11.200H8.800V15H13.300V19H7.500M11 9V11M11 19V21.200" fill="none" stroke="#243c4c" strokeWidth="2" />
    <path d="M18 13L20.200 10.800L22.400 13ZM18 17L20.200 19.200L22.400 17Z" fill="#243c4c" />
  </svg>
);

const ThumbsIcon = () => (
  <svg viewBox="0 0 30 30" className="size-[30px] overflow-visible" fill="#fff">
    <path d="M-.8 9Q-.8 7.500 0.500 6.300L7 -.4Q9.500 .4 8.800 3L8.200 5.400H14Q16 5.600 15.600 7.800L13 15Q12.500 16.500 11 16.500H1Q-.8 16.500 -.8 14.700Z" />
    <path d="M30.800 21Q30.800 22.500 29.500 23.700L23 30.400Q20.500 29.600 21.200 27L21.800 24.600H16Q14 24.400 14.400 22.200L17 15Q17.500 13.500 19 13.500H29Q30.800 13.500 30.800 15.300Z" />
  </svg>
);

const FilterIcon = () => (
  <svg viewBox="0 0 26 26" className="size-[26px]">
    <path d="M2.700 2.400H23.300L15 13.300V24H11V13.300Z" fill="none" stroke="#212529" strokeWidth="2.600" strokeLinejoin="round" />
    <path d="M10.600 13H15.400V25H10.600Z" fill="#212529" />
  </svg>
);

const AccountIcon = () => (
  <svg viewBox="0 0 30 30" className="size-[30px]">
    <defs>
      <clipPath id="face"><circle cx="15" cy="15" r="14" /></clipPath>
    </defs>
    <circle cx="15" cy="15" r="13.700" fill="#fff" stroke="#243c4c" strokeWidth="2.600" />
    <circle cx="15" cy="11.200" r="5.200" fill="#243c4c" />
    <ellipse cx="15" cy="28" rx="13" ry="8.300" fill="#243c4c" clipPath="url(#face)" />
  </svg>
);

const Logo = () => (
  <svg viewBox="24 24 45 53" className="h-[53px] w-[45px]">
    <path d="M46.500 24L69 37.200V63.800L46.500 77L24 63.800V37.200Z" fill="#ff812f" />
    <g fill="#fff" fontFamily="Lato,sans-serif" fontWeight="900">
      <text x="0" y="0" fontSize="33" transform="translate(26.500 62)">I</text>
      <text x="0" y="0" fontSize="43" transform="translate(37.300 67) skewY(-6) scale(1.080 1.120)">n</text>
    </g>
  </svg>
);

/* ---------- page ---------- */

interface NavItem { id: string; icon: React.ReactNode; active?: boolean; more?: boolean }

const nav: NavItem[] = [
  { id: "dashboard", icon: <MdDashboard size={30} /> },
  { id: "category", icon: <CategorySearchIcon />, active: true },
  { id: "gallery", icon: <GalleryIcon /> },
  { id: "mall", icon: <MdLocalMall size={30} /> },
  { id: "alerts", icon: <MdNotificationsActive size={30} /> },
  { id: "data", icon: <DatabaseIcon />, more: true },
  { id: "links", icon: <MdInsertLink size={30} /> },
  { id: "analytics", icon: <MdAnalytics size={30} /> },
  { id: "pricing", icon: <PriceIcon /> },
  { id: "feedback", icon: <ThumbsIcon />, more: true },
];

export default function App() {
  return (
    <div className="relative flex h-[800px] w-[1920px] overflow-hidden bg-white font-['Lato','Noto_Sans',sans-serif] text-[#212529]">
      <aside className="flex h-full w-[120px] shrink-0 flex-col bg-[#243c4c] text-white">
        <div className="h-[162.500px] shrink-0 pt-6 pl-6"><Logo /></div>
        {nav.map((n) => (
          <div key={n.id} className={n.active ? "flex h-[67.400px] shrink-0 items-center bg-[#fffcfb] pl-6" : "flex h-[67.400px] shrink-0 items-center pl-6"}>
            <span className="flex w-[30px] justify-center">{n.icon}</span>
            {n.more && <MdChevronRight size={31} className="ml-[11px]" />}
          </div>
        ))}
      </aside>
      <button className="absolute top-[98px] left-[98px] flex size-[45px] items-center justify-center rounded-full bg-[#ff812f] text-white">
        <MdKeyboardDoubleArrowRight size={22} />
      </button>

      <div className="flex min-w-0 flex-1 flex-col">
        <header className="flex h-[76px] shrink-0 items-center justify-end border-b-[5px] border-[#f4f4f4] pr-[41px]">
          <div className="relative mr-[39px] size-[30px] text-[#05090c]">
            <MdNotifications size={30} className="mt-px" />
            <span className="absolute -top-[10px] left-[12px] flex size-7 items-center justify-center rounded-full bg-[#ff812f] text-[18px] font-bold text-white">6</span>
          </div>
          <div className="h-[60px] w-px bg-black" />
          <div className="ml-[27px]"><AccountIcon /></div>
          <div className="ml-[15px] w-[172px] whitespace-nowrap">
            <div className="text-[21px] leading-[27px] tracking-[0.550px] text-black">Suryansh Dhiman</div>
            <div className="text-[18px] leading-[26px] tracking-[0.300px] text-[#98a4ad]">Division: Internal</div>
          </div>
          <MdKeyboardArrowDown size={31} className="ml-[13px] text-black" />
        </header>

        <main className="flex min-h-0 flex-1 gap-3 pt-1 pr-[37px] pl-[38px]">
          <section className="flex h-[760px] w-[851px] shrink-0 flex-col items-center rounded-t-xl border border-[#e1e3e5]">
            <h2 className="flex h-[77px] items-center pb-[17px] text-[28px] tracking-[0.120px]">Price by Geography Last Week</h2>
            <div className="relative">
              <GeoMap />
              <div className="absolute top-6 left-6 size-[78px] rounded-full bg-[#e3e6eb]">
                <svg viewBox="0 0 78 78" className="size-[78px]" fill="#212529">
                  <path d="M39 12.500L44.800 21.500H33.200ZM39 65L44.800 56H33.200ZM12 39L21 33.200V44.800ZM65 39L56 33.200V44.800Z" />
                </svg>
              </div>
              <div className="absolute top-[35px] left-[150px] flex h-14 w-[110px] rounded-lg bg-[#ff812f]">
                <svg viewBox="0 0 110 56" className="h-14 w-[110px]" stroke="#fff" strokeWidth="3.400">
                  <path d="M19.500 27.700H35.500M27.500 20V35.500M74 27.700H90" />
                </svg>
              </div>
            </div>
          </section>

          <div className="flex w-[839px] shrink-0 flex-col gap-6">
            <section className="flex h-[668px] shrink-0 flex-col rounded-xl border border-[#e1e3e5]">
              <div className="relative flex h-[104px] shrink-0 items-end justify-center pb-[13px]">
                <h2 className="text-[28px] leading-[34px] tracking-[0.350px]">Reg Price Latest 8 Weeks</h2>
                <span className="absolute top-[66px] right-[25px]"><FilterIcon /></span>
              </div>
              <PriceChart />
            </section>
            <section className="h-[60px] shrink-0 rounded-t-xl border border-[#e1e3e5]" />
          </div>
        </main>
      </div>

      <div className="flex h-full w-[23px] shrink-0 flex-col items-center bg-[#fcfcfc]">
        <svg viewBox="0 0 23 800" className="h-[800px] w-[23px]" fill="#8b8b8b">
          <path d="M11.500 7.500L17.500 15.500Q18 17 16.500 17H6Q4.500 17 5 15.500ZM11.500 794L17.500 785.500Q18 784 16.500 784H6Q4.500 784 5 785.500Z" />
          <rect x="5" y="163" width="13" height="250" rx="6.500" />
        </svg>
      </div>
    </div>
  );
}
